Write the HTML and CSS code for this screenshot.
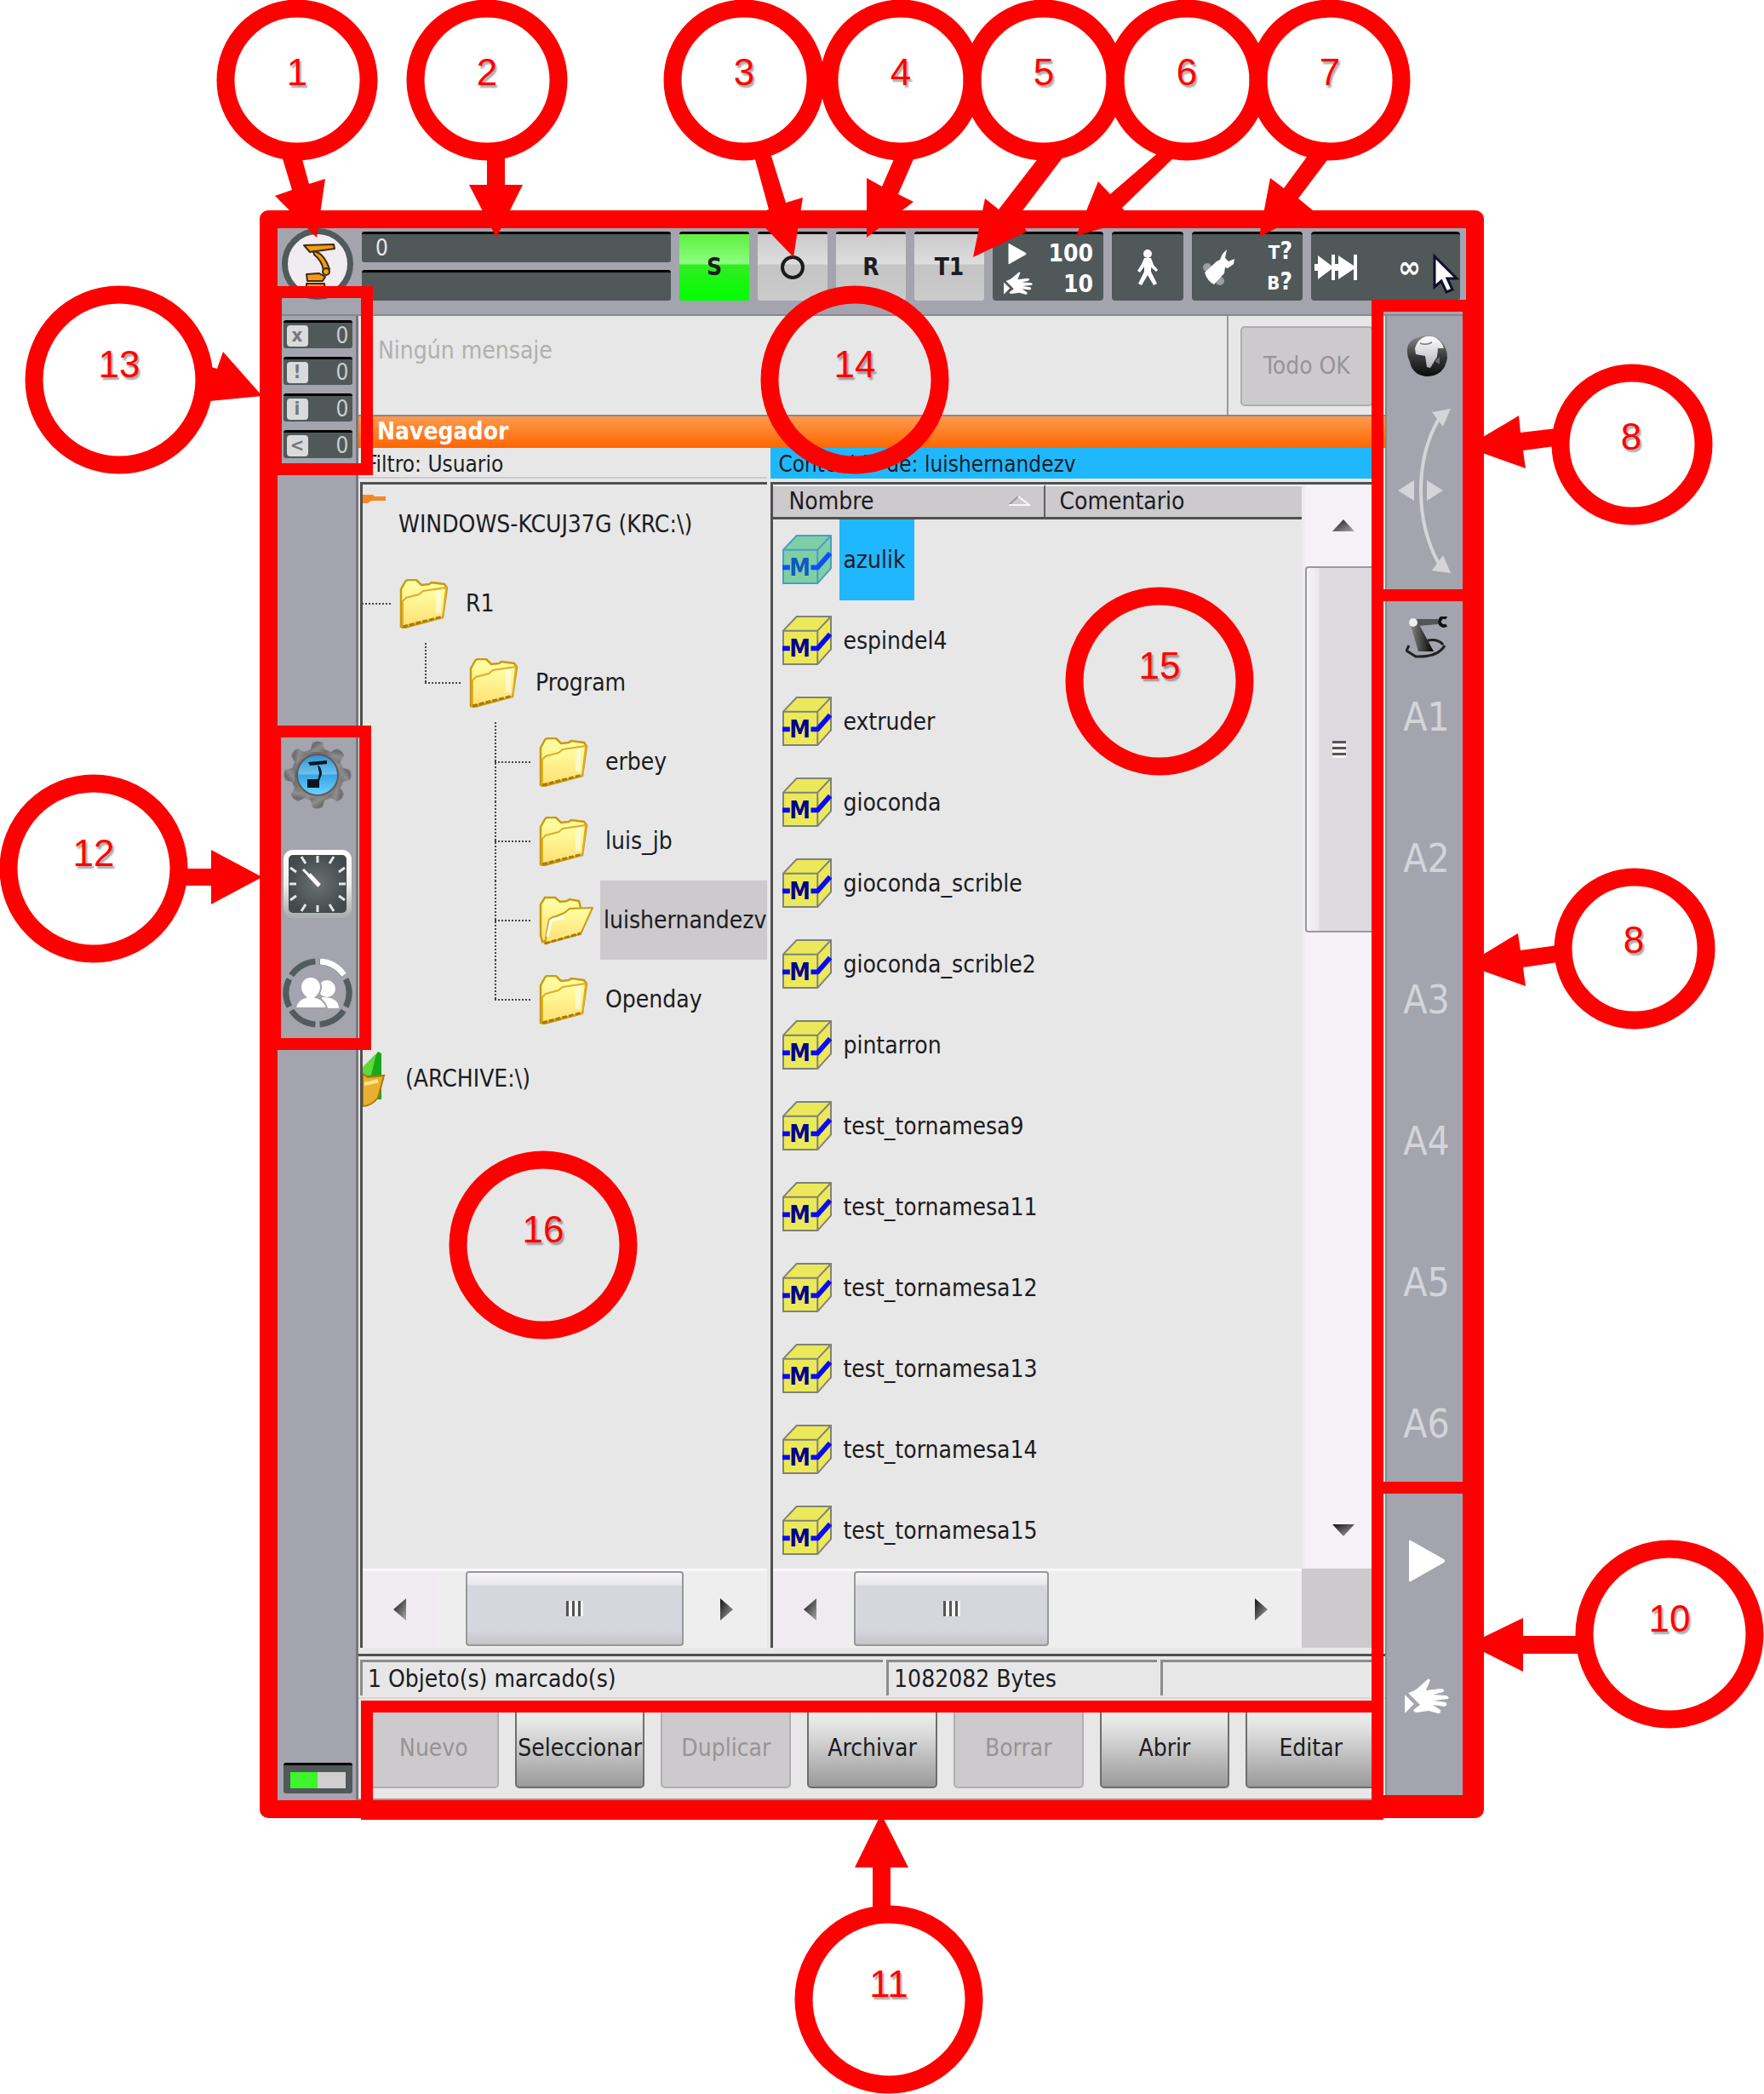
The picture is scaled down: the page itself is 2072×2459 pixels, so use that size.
FILE: index.html
```html
<!DOCTYPE html>
<html lang="es">
<head>
<meta charset="utf-8">
<title>Navegador - interfaz del robot</title>
<link rel="stylesheet" href="styles.css">
</head>
<body>
<svg class="defs" aria-hidden="true">
  <defs>
    <linearGradient id="gFolder" x1="0" y1="0" x2="0" y2="1"><stop offset="0" stop-color="#ffffa6"/><stop offset="1" stop-color="#ffe070"/></linearGradient>
    <linearGradient id="gGear" x1="0" y1="0" x2="1" y2="1"><stop offset="0" stop-color="#a09e9e"/><stop offset=".3" stop-color="#6c6a6a"/><stop offset=".6" stop-color="#8f8d8d"/><stop offset="1" stop-color="#727070"/></linearGradient>
    <linearGradient id="gBlue" x1="0" y1="0" x2="0" y2="1"><stop offset="0" stop-color="#2f93d0"/><stop offset=".48" stop-color="#6cc2f0"/><stop offset=".5" stop-color="#37a5e4"/><stop offset="1" stop-color="#6fd0ff"/></linearGradient>
    <linearGradient id="gRim" x1="0" y1="0" x2="0" y2="1"><stop offset="0" stop-color="#fff"/><stop offset=".5" stop-color="#eee"/><stop offset="1" stop-color="#aeb0b0"/></linearGradient>
    <radialGradient id="gDial"><stop offset="0" stop-color="#6a7173"/><stop offset="1" stop-color="#424a4c"/></radialGradient>
    <linearGradient id="gGlobe" x1="0" y1="0" x2="0" y2="1"><stop offset="0" stop-color="#8a8a8a"/><stop offset=".5" stop-color="#3a3a3a"/><stop offset="1" stop-color="#0c0c0c"/></linearGradient>
    <linearGradient id="gLand" x1="0" y1="0" x2="0" y2="1"><stop offset="0" stop-color="#fff"/><stop offset="1" stop-color="#b4b4b8"/></linearGradient>
    <linearGradient id="gArm" x1="0" y1="0" x2="1" y2="0"><stop offset="0" stop-color="#888"/><stop offset="1" stop-color="#000"/></linearGradient>
    <linearGradient id="gTri" x1="0" y1="0" x2="1" y2="1"><stop offset="0" stop-color="#111"/><stop offset="1" stop-color="#aaa"/></linearGradient>
    <symbol id="folder" viewBox="0 0 58 58">
      <path d="M2 56V12L7 3Q8 1 11 1H20L26 7L35 6L38 4L53 6L56 10L51 45L10 56Q5 58 2 56Z" fill="url(#gFolder)" stroke="#c99a10" stroke-width="2.5"/>
      <path d="M4 56V26L8 22L23 18L28 14L55 10L51 45Z" fill="url(#gFolder)" stroke="#dcae2a" stroke-width="2"/>
      <path d="M4 56L51 44" stroke="#a87a08" stroke-width="3" stroke-dasharray="6 2"/>
      <path d="M46 14V40" stroke="#fff" stroke-opacity=".5" stroke-width="6"/>
    </symbol>
    <symbol id="folder-open" viewBox="0 0 64 58">
      <path d="M4 54L2 46V10L7 2H19L25 7L33 6L36 4L47 6L49 14V30L30 48Z" fill="url(#gFolder)" stroke="#c99a10" stroke-width="2.5"/>
      <path d="M7 56L12 28Q14 25 20 24L30 20L36 15L63 14L49 45Z" fill="url(#gFolder)" stroke="#c99a10" stroke-width="2"/>
      <path d="M10 48L14 29L30 25" stroke="#fff" stroke-width="3" fill="none"/>
      <path d="M7 56L49 44" stroke="#a87a08" stroke-width="3" stroke-dasharray="6 2"/>
    </symbol>
    <symbol id="module" viewBox="0 0 60 60">
      <path d="M1 18L17 1H58V40L42 58H1Z" fill="var(--face,#ebe95a)" stroke="var(--edge,#80807c)" stroke-width="2"/>
      <path d="M1 18H42V58M42 18L58 1" fill="none" stroke="var(--edge,#80807c)" stroke-width="2"/>
      <path d="M0 39H9M34 39H42L57 22" fill="none" stroke="var(--band,#0a0af5)" stroke-width="6"/>
      <text x="21" y="49" text-anchor="middle" class="module-letter">M</text>
    </symbol>
    <symbol id="hand" viewBox="0 0 52 46">
      <path d="M0 19L11 30L0 41Z"/>
      <path d="M4 17Q12 15 18 9L27 1Q31 0 29 4L25 14L43 12Q48 13 45 16L33 19L48 20Q53 21 51 24L34 26L48 28Q51 31 47 33L33 31L42 37Q43 41 39 41L28 38L14 40Q10 39 10 37L18 31Z"/>
    </symbol>
    <symbol id="play" viewBox="0 0 44 50"><path d="M1 2Q1 0 3 1L42 23Q44 25 42 27L3 49Q1 50 1 48Z"/></symbol>
  </defs>
</svg>

<main class="figure">
  <section class="pendant">
    <header class="topbar">
      <button class="logo" aria-label="Menú principal">
        <svg viewBox="0 0 84 84" width="84" height="84">
          <circle cx="42" cy="42" r="38.500" fill="#f0ecf1" stroke="#505a5c" stroke-width="7"/>
          <g fill="#f49b12" stroke="#3c2c12" stroke-width="2" stroke-linejoin="round">
            <path d="M26 20L61 19L62 24L33 28Z"/>
            <path d="M37 27Q49 28 56 48L49 49Q47 38 38 31Z"/>
            <circle cx="52" cy="51" r="4"/>
            <path d="M29 54L44 53L51 57L48 62H30Z"/>
            <path d="M29 65H50L51 73H29Z"/>
          </g>
        </svg>
      </button>
      <div class="status-lines"><div class="status-line">0</div><div class="status-line"></div></div>
      <button class="mode mode-on">S</button>
      <button class="mode" aria-label="O"><svg width="30" height="30" viewBox="0 0 30 30"><circle cx="15" cy="15" r="12" fill="none" stroke="#1c1c1c" stroke-width="4"/></svg></button>
      <button class="mode">R</button>
      <button class="mode">T1</button>
      <button class="dark speed">
        <span class="speed-row"><svg class="speed-play" width="22" height="26" fill="#fff"><use href="#play"/></svg>100</span>
        <span class="speed-row"><svg width="36" height="30" fill="#fff"><use href="#hand"/></svg>10</span>
      </button>
      <button class="dark walk" aria-label="Jog"><svg width="30" height="44" viewBox="0 0 30 44" fill="#fff"><circle cx="15" cy="6" r="5"/><path d="M11 11H19L22 19L27 25L25 27L19 22V27L26 41L22 43L15 31L8 43L4 41L11 27V21L6 28L3 26L8 18Z"/></svg></button>
      <button class="dark tool">
        <svg width="40" height="44" viewBox="0 0 40 44"><circle cx="6" cy="22" r="5" fill="#9a9ea0"/><circle cx="21" cy="38" r="5" fill="#9a9ea0"/><path d="M3 28L17 15L21 13L24 6L29 1L27 11L31 15L38 12L37 18L30 23L27 22L26 29L14 42Q6 38 3 28Z" fill="#fff"/></svg>
        <span class="tool-text"><span><small>T</small>?</span><span><small>B</small>?</span></span>
      </button>
      <button class="dark steps">
        <svg width="52" height="30" viewBox="0 0 52 30" fill="#fff"><path d="M0 11H4V1L20 13V0H24V11H28V1L46 13V0H50V30H46V17L28 29V19H24V30H20V17L4 29V19H0Z"/></svg>
        <span class="infinity">∞</span>
      </button>
    </header>

    <div class="body">
      <aside class="left-rail">
        <ul class="counters">
          <li><b>x</b>0</li><li><b>!</b>0</li><li><b>i</b>0</li><li><b>&lt;</b>0</li>
        </ul>
        <div class="rail-tools">
          <button aria-label="Configuración"><svg width="82" height="82" viewBox="0 0 82 82">
            <g fill="url(#gGear)"><circle cx="41" cy="41" r="31"/>
              <path id="tooth" d="M32 14L35 3Q41 0 47 3L50 14Z"/><use href="#tooth" transform="rotate(45 41 41)"/><use href="#tooth" transform="rotate(90 41 41)"/><use href="#tooth" transform="rotate(135 41 41)"/><use href="#tooth" transform="rotate(180 41 41)"/><use href="#tooth" transform="rotate(225 41 41)"/><use href="#tooth" transform="rotate(270 41 41)"/><use href="#tooth" transform="rotate(315 41 41)"/></g>
            <circle cx="41" cy="41" r="24" fill="url(#gBlue)" stroke="#5c5a5a" stroke-width="2"/>
            <path d="M30 26L52 24V28L32 30ZM41 29Q46 32 46 40L43 48H41L43 39ZM29 46H43V56H29Z" fill="#0a1620"/></svg></button>
          <button aria-label="Reloj"><svg width="82" height="82" viewBox="0 0 82 82">
            <rect x="4" y="4" width="74" height="74" rx="8" fill="url(#gDial)" stroke="url(#gRim)" stroke-width="6"/>
            <path d="M41 8V16M41 66V74M8 41H16M66 41H74M22 9L27 17M60 9L55 17M22 73L27 65M60 73L55 65M9 22L16 27M73 22L66 27M9 60L16 55M73 60L66 55" stroke="#e6e6e6" stroke-width="3"/>
            <path d="M43 43L31 30" stroke="#fff" stroke-width="5"/><path d="M43 43L24 24" stroke="#fff" stroke-width="3"/></svg></button>
          <button aria-label="Usuarios"><svg width="82" height="82" viewBox="0 0 82 82">
            <circle cx="41" cy="41" r="37" fill="none" stroke="#525c5e" stroke-width="7" pathLength="360" stroke-dasharray="52 8" transform="rotate(-26 41 41)"/>
            <path d="M44 4A37 37 0 0 1 72 20" fill="none" stroke="#fff" stroke-width="7"/>
            <g fill="#fff"><circle cx="52" cy="36" r="10"/><path d="M46 46Q66 46 66 59H46Z"/></g>
            <g fill="#fff" stroke="#a4a4ae" stroke-width="2"><path d="M15 59Q16 49 27 46Q21 41 21 34A12 12 0 0 1 45 34Q45 41 39 46Q50 49 52 59Z"/></g></svg></button>
        </div>
        <div class="battery"><i></i></div>
      </aside>

      <div class="workspace">
        <div class="messages">
          <p>Ningún mensaje</p>
          <div class="confirm"><button disabled>Todo OK</button></div>
        </div>
        <h1 class="title">Navegador</h1>
        <div class="panes">
          <section class="pane">
            <h2 class="pane-head">Filtro: Usuario</h2>
            <div class="pane-box">
              <ul class="tree">
                <li><div class="node root"><svg width="27" height="80" viewBox="0 0 27 80"><path d="M0 5H12L14 7H27V12H10L6 15H0Z" fill="#f08a20"/></svg><span>WINDOWS-KCUJ37G (KRC:\)</span></div>
                  <ul class="drive">
                    <li><div class="node"><i class="wire"></i><svg><use href="#folder"/></svg><span>R1</span></div>
                      <ul>
                        <li><div class="node"><i class="wire end"></i><svg><use href="#folder"/></svg><span>Program</span></div>
                          <ul>
                            <li><div class="node"><i class="wire mid"></i><svg><use href="#folder"/></svg><span>erbey</span></div></li>
                            <li><div class="node"><i class="wire mid"></i><svg><use href="#folder"/></svg><span>luis_jb</span></div></li>
                            <li><div class="node current"><i class="wire mid"></i><svg><use href="#folder-open"/></svg><span>luishernandezv</span></div></li>
                            <li><div class="node"><i class="wire end"></i><svg><use href="#folder"/></svg><span>Openday</span></div></li>
                          </ul>
                        </li>
                      </ul>
                    </li>
                  </ul>
                </li>
                <li><div class="node root archive"><svg width="27" height="68" viewBox="0 0 27 68"><path d="M0 28L18 2L22 4V58H10Z" fill="#18a818"/><path d="M0 20L16 4L10 30H0Z" fill="#5fd83c"/><path d="M0 28L6 32L25 30L18 56Q10 66 0 66Z" fill="#e8b030" stroke="#a87808" stroke-width="2"/><path d="M2 40Q12 38 18 36" stroke="#ffe48a" stroke-width="4" fill="none"/></svg><span>(ARCHIVE:\)</span></div></li>
              </ul>
              <div class="hscroll">
                <button aria-label="Izquierda"><svg width="16" height="26"><path d="M15 0V26L0 13Z" fill="url(#gTri)"/></svg></button>
                <div class="thumb thumb-tree"><i class="grip"></i></div>
                <button aria-label="Derecha"><svg width="16" height="26"><path d="M1 0V26L16 13Z" fill="url(#gTri)"/></svg></button>
              </div>
            </div>
          </section>

          <section class="pane pane-files">
            <h2 class="pane-head active">Contenido de: luishernandezv</h2>
            <div class="pane-box">
              <div class="list-area">
                <div class="list">
                  <table>
                    <thead><tr><th class="col-name">Nombre<svg width="26" height="12" viewBox="0 0 26 12"><path d="M1 11L12 1" stroke="#999" stroke-width="2"/><path d="M12 1L25 11H1" fill="none" stroke="#f6f6f6" stroke-width="2"/></svg></th><th>Comentario</th></tr></thead>
                    <tbody>
                      <tr class="selected"><td><div class="file"><svg><use href="#module"/></svg><span>azulik</span></div></td><td></td></tr>
                      <tr><td><div class="file"><svg><use href="#module"/></svg><span>espindel4</span></div></td><td></td></tr>
                      <tr><td><div class="file"><svg><use href="#module"/></svg><span>extruder</span></div></td><td></td></tr>
                      <tr><td><div class="file"><svg><use href="#module"/></svg><span>gioconda</span></div></td><td></td></tr>
                      <tr><td><div class="file"><svg><use href="#module"/></svg><span>gioconda_scrible</span></div></td><td></td></tr>
                      <tr><td><div class="file"><svg><use href="#module"/></svg><span>gioconda_scrible2</span></div></td><td></td></tr>
                      <tr><td><div class="file"><svg><use href="#module"/></svg><span>pintarron</span></div></td><td></td></tr>
                      <tr><td><div class="file"><svg><use href="#module"/></svg><span>test_tornamesa9</span></div></td><td></td></tr>
                      <tr><td><div class="file"><svg><use href="#module"/></svg><span>test_tornamesa11</span></div></td><td></td></tr>
                      <tr><td><div class="file"><svg><use href="#module"/></svg><span>test_tornamesa12</span></div></td><td></td></tr>
                      <tr><td><div class="file"><svg><use href="#module"/></svg><span>test_tornamesa13</span></div></td><td></td></tr>
                      <tr><td><div class="file"><svg><use href="#module"/></svg><span>test_tornamesa14</span></div></td><td></td></tr>
                      <tr><td><div class="file"><svg><use href="#module"/></svg><span>test_tornamesa15</span></div></td><td></td></tr>
                    </tbody>
                  </table>
                </div>
                <div class="vscroll">
                  <button aria-label="Arriba"><svg width="26" height="14"><path d="M0 14H26L13 0Z" fill="url(#gTri)"/></svg></button>
                  <div class="thumb thumb-v"><i class="grip"></i></div>
                  <button class="down" aria-label="Abajo"><svg width="26" height="14"><path d="M0 0H26L13 14Z" fill="url(#gTri)"/></svg></button>
                </div>
              </div>
              <div class="foot-area">
                <div class="hscroll">
                  <button aria-label="Izquierda"><svg width="16" height="26"><path d="M15 0V26L0 13Z" fill="url(#gTri)"/></svg></button>
                  <div class="thumb thumb-list"><i class="grip"></i></div>
                  <button aria-label="Derecha"><svg width="16" height="26"><path d="M1 0V26L16 13Z" fill="url(#gTri)"/></svg></button>
                </div>
                <div class="corner"></div>
              </div>
            </div>
          </section>
        </div>
        <div class="statusbar"><span class="s1">1 Objeto(s) marcado(s)</span><span class="s2">1082082 Bytes</span><span class="s3"></span></div>
        <nav class="actions">
          <button disabled>Nuevo</button><button>Seleccionar</button><button disabled>Duplicar</button><button>Archivar</button><button disabled>Borrar</button><button>Abrir</button><button>Editar</button>
        </nav>
      </div>

      <aside class="right-rail">
        <svg width="50" height="50" viewBox="0 0 50 50"><path d="M3 12Q8 4 16 3Q30 -2 40 6Q49 14 49 27Q46 49 24 49Q8 47 5 32Q0 22 3 12Z" fill="url(#gGlobe)"/><path d="M11 16Q14 5 24 2Q36 0 43 11L45 16L38 16L37 26L29 39L25 38L23 25L12 23Z" fill="url(#gLand)"/><path d="M17 10Q24 13 31 9M36 31L39 28V33Z" stroke="#777" stroke-width="1.500" fill="none"/></svg>
        <svg class="arc" width="62" height="198" viewBox="3 0 62 198" fill="#d6d4d9"><path d="M51 14Q30 50 30 98Q30 146 51 184" fill="none" stroke="#d6d4d9" stroke-width="4"/><path d="M43 6L65 2L56 23ZM43 192L65 195L56 174ZM3 98L22 86V110ZM56 98L37 86V110Z"/></svg>
        <svg width="50" height="50" viewBox="0 0 50 50"><path d="M4 34L1 40L12 47Q38 48 46 34M26 28Q38 26 44 33" fill="none" stroke="#222" stroke-width="3"/><path d="M5 7L13 4L33 41H15Z" fill="url(#gArm)"/><path d="M9 3L38 3V9L15 11Z" fill="#555"/><circle cx="9" cy="7" r="5" fill="#eee"/><path d="M48 2A5 5 0 1 0 48 10" fill="none" stroke="#111" stroke-width="4"/></svg>
        <ol class="axes"><li>A1</li><li>A2</li><li>A3</li><li>A4</li><li>A5</li><li>A6</li></ol>
        <svg class="play" width="44" height="50" fill="#fff"><use href="#play"/></svg>
        <svg width="52" height="46" fill="#fff"><use href="#hand"/></svg>
      </aside>
    </div>
  </section>

  <svg class="callouts" viewBox="0 0 2072 2459" preserveAspectRatio="none">
    <path d="M1685 301V337L1693 330L1699 343L1706 340L1700 327H1711Z" fill="#fff" stroke="#101028" stroke-width="3"/>
    <g class="ring">
      <circle cx="349" cy="94" r="84"/><circle cx="572" cy="94" r="84"/><circle cx="874" cy="94" r="84"/><circle cx="1058" cy="94" r="84"/><circle cx="1226" cy="94" r="84"/><circle cx="1394" cy="94" r="84"/><circle cx="1562" cy="94" r="84"/>
      <circle cx="1917" cy="522" r="84"/><circle cx="1920" cy="1114" r="84"/>
      <circle cx="140" cy="446" r="100"/><circle cx="110" cy="1020" r="100"/><circle cx="1004" cy="446" r="100"/><circle cx="1362" cy="800" r="100"/><circle cx="638" cy="1462" r="100"/><circle cx="1044" cy="2348" r="100"/><circle cx="1961" cy="1919" r="100"/>
    </g>
    <g class="area">
      <rect x="324" y="343" width="107" height="208"/><rect x="323" y="859" width="106" height="367"/>
      <rect x="1618" y="359" width="107" height="340"/><rect x="1618" y="699" width="107" height="1048"/><rect x="1618" y="1747" width="107" height="368"/>
      <rect x="431" y="2004" width="1187" height="126"/><path d="M431 2121H1618"/>
    </g>
    <g fill="#f00">
      <path d="M330 180L353 180L363 216L382 210L372 279L323 230L343 223Z"/>
      <path d="M572 180H593V217H614L583 279L551 217H572Z"/>
      <path d="M885 180L905 180L923 238L943 232L932 302L884 252L903 246Z"/>
      <path d="M1053 180L1076 180L1055 228L1073 237L1018 279L1018 209L1036 219Z"/>
      <path d="M1224 180L1252 180L1196 254L1206 272L1143 302L1157 233L1173 246Z"/>
      <path d="M1362 178L1384 180L1318 244L1330 258L1264 277L1290 213L1304 228Z"/>
      <path d="M1538 180L1565 180L1525 233L1542 247L1479 278L1492 209L1508 221Z"/>
      <path d="M1828 503L1826 524L1789 529L1792 550L1722 525L1784 488L1786 508Z"/>
      <path d="M1830 1110L1830 1130L1789 1136L1792 1158L1722 1133L1783 1096L1786 1116Z"/>
      <path d="M1860 1921V1942H1789V1963L1725 1931L1789 1900V1921Z"/>
      <path d="M245 430L255 433L262 413L308 465L246 471Z"/>
      <path d="M216 1020H248V998L308 1030L248 1062V1040H216Z"/>
      <path d="M1025 2245V2193H1004L1035 2130L1067 2193H1046V2245Z"/>
    </g>
    <g class="num">
      <text x="349" y="100">1</text><text x="572" y="100">2</text><text x="874" y="100">3</text><text x="1058" y="100">4</text><text x="1226" y="100">5</text><text x="1394" y="100">6</text><text x="1562" y="100">7</text>
      <text x="1916" y="528">8</text><text x="1919" y="1119">8</text>
      <text x="140" y="443">13</text><text x="110" y="1017">12</text><text x="1004" y="443">14</text><text x="1362" y="797">15</text><text x="638" y="1459">16</text><text x="1044" y="2345">11</text><text x="1961" y="1916">10</text>
    </g>
  </svg>
</main>
</body>
</html>
```
FILE: styles.css
```css
* { box-sizing: border-box; }
body { margin: 0; background: #fff; font: 28px/34px "DejaVu Sans Condensed", "DejaVu Sans", Tahoma, sans-serif; color: #1c1c22; }
ul, ol, p, h1, h2 { margin: 0; padding: 0; list-style: none; font-size: 28px; }
button { margin: 0; padding: 0; border: 0; background: none; font: inherit; color: inherit; }
svg { display: block; flex: none; }
.defs { position: absolute; width: 0; height: 0; }
.module-letter { font: bold 28px "DejaVu Sans Condensed", sans-serif; fill: var(--letter, #00008c); }

.figure { position: relative; padding: 247px 329px 324px 305px; }
.pendant { border: 21px solid #f00; border-radius: 10px; background: #a4a4ae; }

.topbar { display: flex; align-items: flex-start; gap: 10px; padding: 4px 7px 16px 5px; border-bottom: 2px solid #88888c; }
.logo { height: 81px; margin-top: -4px; }
.status-lines { flex: 1; display: grid; gap: 9px; }
.status-line { height: 36px; padding: 0 16px; border-top: 3px solid #000; border-radius: 3px; background: #50585a; color: #e8e8e8; font-size: 26px; line-height: 32px; }
.mode { width: 82px; height: 81px; display: grid; place-items: center; border-top: 3px solid #000; border-radius: 3px; background: linear-gradient(#cbcaca, #dedede 45%, #c4c4c4 46%, #cbcbcb); font-weight: bold; }
.mode-on { background: linear-gradient(#60ee40, #8cff80 45%, #32ec22 46%, #00ff00); }
.dark { height: 81px; display: flex; border-top: 3px solid #000; border-radius: 4px; background: #50585a; color: #fff; font-weight: bold; }
.speed { width: 130px; flex-direction: column; padding: 6px 12px; gap: 2px; }
.speed-row { width: 100%; height: 34px; display: flex; align-items: center; justify-content: space-between; }
.speed-play { margin-left: 6px; }
.walk { width: 84px; align-items: center; justify-content: center; }
.tool { width: 130px; align-items: center; justify-content: space-between; padding: 0 12px; }
.tool-text { display: grid; text-align: right; }
.tool-text small { font-size: 22px; }
.steps { width: 175px; align-items: center; padding: 0 4px; gap: 46px; }
.infinity { font-size: 36px; }

.body { display: flex; }
.left-rail, .right-rail { flex: 0 0 95px; display: flex; flex-direction: column; align-items: center; }
.left-rail { border-right: 3px solid #77777c; padding: 5px 0 8px 2px; }
.counters { display: grid; gap: 10px; width: 81px; }
.counters li { height: 33px; display: flex; align-items: center; justify-content: space-between; padding: 0 4px; border-top: 3px solid #000; border-radius: 3px; background: #50585a; color: #ccc; font-size: 26px; line-height: 30px; }
.counters b { width: 25px; height: 25px; border-radius: 4px; background: #dadadc; color: #77777a; font-size: 22px; line-height: 23px; text-align: center; }
.rail-tools { display: grid; gap: 46px; margin: 331px 0 auto; }
.battery { width: 81px; height: 36px; padding: 8px 8px 6px; border-top: 3px solid #000; border-radius: 3px; background: #50585a; }
.battery i { display: block; height: 19px; background: linear-gradient(90deg, #3cf52c 50%, #cfcfcf 50%); }

.workspace { flex: 1; min-width: 0; background: #e7e7e7; }
.messages { display: flex; height: 118px; border-bottom: 2px solid #88888c; color: #b0b0b0; }
.messages p { flex: 1; padding: 24px 23px; }
.confirm { width: 186px; padding: 12px 14px 12px 14px; border-left: 2px solid #999; }
.confirm button { width: 100%; height: 94px; border: 2px solid #aeacae; border-radius: 5px; background: #cdcacd; color: #969496; }
.title { height: 37px; padding-left: 22px; background: linear-gradient(#ff9a4d, #ff6600); color: #fff; line-height: 36px; }
.panes { display: grid; grid-template-columns: minmax(0, 2fr) minmax(0, 3fr); border-bottom: 3px solid #505050; padding-bottom: 7px; }
.pane { display: flex; flex-direction: column; min-width: 0; padding-right: 2px; }
.pane-files { padding-right: 6px; }
.pane-head { height: 36px; margin-bottom: 4px; padding-left: 9px; border-bottom: 2px solid #cdcacd; font-size: 26px; font-weight: normal; line-height: 38px; }
.pane-head.active { margin-left: 2px; background: #1fb8ff; border-color: #1fb8ff; }
.pane-box { flex: 1; display: flex; flex-direction: column; border-top: 3px solid #505050; border-left: 3px solid #505050; margin-left: 2px; }

.tree { flex: 1; overflow: hidden; white-space: nowrap; }
.drive { margin-left: -9px; }
.drive ul { margin-left: 82px; }
.node { display: flex; align-items: center; height: 93px; }
.node > svg { width: 58px; height: 58px; margin-left: 8px; }
.node > span { line-height: 93px; padding-left: 5px; margin-left: 15px; }
.root > svg { width: 27px; height: 80px; margin-left: 0; }
.root > span { margin-left: 10px; }
.archive > svg { height: 68px; }
.archive > span { margin-left: 18px; }
.current > svg { width: 64px; }
.node.current > span { flex: 1; margin-left: 8px; padding-left: 4px; background: #cdcacd; }
.wire { flex: none; width: 44px; height: 93px; background: repeating-linear-gradient(90deg, #444 0 2px, transparent 2px 4px) 0 46px / 100% 2px no-repeat; }
.wire.mid, .wire.end { background: repeating-linear-gradient(90deg, #444 0 2px, transparent 2px 4px) 0 46px / 100% 2px no-repeat, repeating-linear-gradient(#444 0 2px, transparent 2px 4px) 0 0 / 2px 100% no-repeat; }
.wire.end { background-size: 100% 2px, 2px 48px; }

.list-area { display: flex; height: 1273px; overflow: hidden; }
.list { flex: 1; min-width: 0; }
table { width: 100%; border-collapse: separate; border-spacing: 0; table-layout: fixed; }
th { height: 41px; padding: 0 16px; background: #cdcacd; border-bottom: 3px solid #505050; border-top: 2px solid #f4f4f4; font-weight: normal; text-align: left; }
.col-name { width: 320px; padding-left: 18px; border-right: 2px solid #606060; }
.col-name svg { float: right; margin-top: 10px; }
td { padding: 0 0 0 11px; }
.file { display: flex; align-items: center; height: 95px; white-space: nowrap; }
.file svg { width: 59px; height: 59px; margin-right: 8px; }
.file span { line-height: 95px; padding: 0 10px 0 4px; }
.selected span { background: #1fb8ff; }
.selected { --face: #7fcfa6; --edge: #4c9cc0; --band: #0c50fa; --letter: #1058c0; }

.hscroll { flex: 1; display: flex; height: 93px; background: #efeeef; border-top: 3px solid #faf8fb; }
.hscroll button { width: 88px; display: grid; place-items: center; }
.hscroll button:first-child { background: #f0ebf0; }
.hscroll button:last-child { margin: 0 4px 0 auto; }
.pane-box > .hscroll { flex: none; }
.thumb { display: grid; place-items: center; border: 2px solid #999; border-radius: 4px; background: linear-gradient(#f6f4f7, #e8e7ea 17%, #d6d6df 18%, #d6d6df 80%, #c4c4c8); }
.thumb-tree { width: 256px; margin-left: 33px; height: 88px; }
.thumb-list { width: 229px; margin-left: 7px; height: 88px; }
.grip { width: 20px; height: 18px; background: repeating-linear-gradient(90deg, #555 0 3px, #f4f4f4 3px 7px); }
.vscroll { width: 92px; display: flex; flex-direction: column; background: #f5f1f6; border-left: 4px solid #eeecef; }
.vscroll button { height: 96px; display: grid; place-items: center; padding-left: 2px; }
.vscroll .down { margin-top: auto; height: 90px; }
.thumb-v { height: 430px; justify-items: start; padding-left: 30px; background: linear-gradient(90deg, #f6f4f7, #e8e7ea 17%, #dcdade 18%); }
.thumb-v .grip { width: 16px; height: 20px; background: repeating-linear-gradient(#555 0 3px, #f4f4f4 3px 7px); }
.foot-area { display: flex; }
.corner { width: 92px; background: #cdcacd; }

.statusbar { display: flex; gap: 4px; padding: 4px 6px 2px 2px; border-bottom: 2px solid #d8d6d8; }
.statusbar span { height: 42px; padding-left: 6px; border-top: 3px solid #8c8c8c; border-left: 3px solid #8c8c8c; line-height: 40px; white-space: nowrap; }
.s1 { flex: 616; }
.s2 { flex: 314; }
.s3 { flex: 254; }
.actions { display: flex; gap: 19px; padding: 10px 11px 12px 12px; border-bottom: 2px solid #999; }
.actions button { flex: 1 1 0; min-width: 0; height: 95px; border: 2px solid #6e6e6e; border-radius: 5px; background: linear-gradient(#f2f2f2, #dcdcdc 30%, #9a9a9a); }
.actions button:disabled { border-color: #b0aeb0; background: #cdcacd; color: #969496; }

.right-rail { padding-top: 22px; border-left: 2px solid #88888c; }
.arc { margin: 35px 6px 48px 0; }
.axes { margin-top: 38px; display: grid; gap: 106px; }
.axes li { font-size: 46px; line-height: 60px; color: #d4d4d9; }
.play { margin: 106px 0 113px; }

.callouts { position: absolute; top: 0; left: 0; width: 100%; height: 100%; pointer-events: none; }
.ring { fill: none; stroke: #f00; stroke-width: 21px; }
.area { fill: none; stroke: #f00; stroke-width: 14px; }
.num { font: 44px "Liberation Sans", Arial, sans-serif; fill: #f00; text-anchor: middle; text-shadow: 2px 3px 2px rgba(0, 0, 0, .35); }
```
